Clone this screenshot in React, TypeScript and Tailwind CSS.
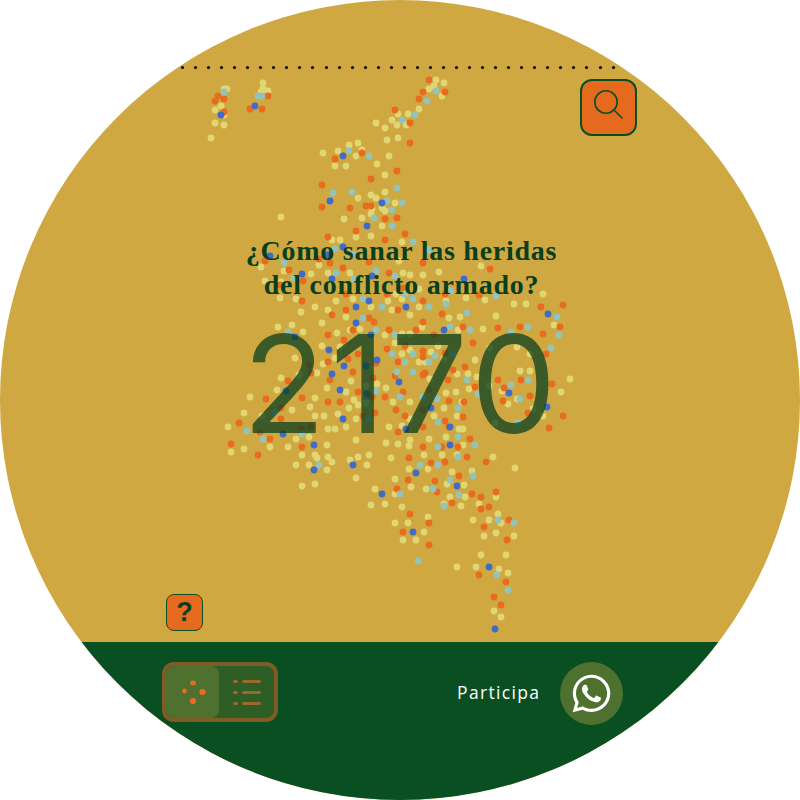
import { FaWhatsapp } from "react-icons/fa";

const raw: Record<string, number[]> = {
  "#E0D673": [263,83,263,89,268,91,261,92,224,89,227,89,221,106,215,110,224,115,215,123,224,125,211,138,436,80,444,83,434,86,429,89,442,96,419,109,408,114,398,114,392,120,397,125,406,125,376,123,385,128,387,140,398,138,349,145,358,143,362,150,338,151,323,153,356,156,389,156,335,166,346,166,377,164,385,175,385,192,371,195,376,198,358,198,395,203,382,208,385,211,372,209,371,214,362,218,344,219,382,226,371,236,356,237,340,240,332,240,402,242,281,217,
    371,236,261,267,319,265,284,271,311,274,328,273,350,273,265,281,281,282,280,298,296,299,336,301,353,299,388,301,301,312,315,307,328,310,346,317,392,310,371,307,373,307,322,323,360,329,278,327,292,325,303,332,337,333,350,330,322,346,340,347,385,335,395,343,
    399,261,403,273,410,275,423,275,439,272,481,266,419,289,402,299,396,294,419,307,410,315,446,301,466,298,485,300,514,304,526,304,496,316,449,318,460,317,422,327,458,330,483,329,554,325,410,334,402,334,410,350,431,352,438,346,517,347,490,348,530,354,402,354,543,294,
    295,358,317,373,335,358,323,364,281,378,299,375,277,390,250,397,327,388,346,392,351,381,366,386,386,388,315,398,354,400,366,403,358,405,349,408,393,402,310,407,244,413,292,410,262,416,315,416,324,416,338,414,356,419,346,427,389,427,228,427,328,429,335,429,309,437,296,439,356,440,386,443,244,449,231,452,270,447,288,447,327,445,302,455,315,455,317,458,328,457,332,462,350,460,358,457,369,455,391,458,296,465,309,465,327,470,367,465,356,478,302,486,315,484,375,489,395,479,395,494,
    430,352,419,362,425,362,475,360,444,359,468,374,457,374,430,379,477,377,520,371,530,371,570,379,561,392,469,389,456,392,446,393,508,404,517,399,502,391,410,402,444,408,462,402,434,416,457,416,543,416,533,409,410,419,495,423,459,429,463,429,402,426,390,428,446,437,429,439,410,440,398,444,409,446,463,445,424,455,442,455,457,455,493,457,409,469,428,469,452,472,472,471,515,468,395,480,447,484,411,487,426,489,464,485,450,497,465,497,496,497,489,386,
    376,489,465,486,371,505,385,504,402,507,444,504,461,506,479,504,498,514,473,520,489,520,501,523,428,517,395,523,408,523,424,532,403,540,416,540,484,536,496,533,514,536,481,555,506,555,457,567,476,567,499,569,508,573,494,611,501,617,377,384],
  "#E96B1E": [429,80,423,92,445,92,419,99,395,110,410,123,410,143,362,153,335,159,397,171,371,179,322,185,322,207,350,208,366,206,371,206,397,218,385,219,356,231,328,237,405,234,385,240,218,96,215,101,224,99,224,112,268,96,250,109,262,109,
    265,261,289,270,330,263,343,268,369,262,389,273,303,281,280,285,302,301,346,294,387,294,346,310,398,310,332,315,369,318,374,322,353,330,389,330,328,335,344,340,387,349,319,259,
    423,263,490,269,445,294,479,295,423,301,541,307,563,305,442,314,423,322,416,330,498,328,520,327,560,327,543,334,473,343,434,335,405,346,423,351,445,353,546,354,463,327,403,288,
    288,381,330,380,353,372,328,362,266,399,302,398,328,402,340,402,358,392,385,397,363,416,396,410,239,423,281,419,260,432,270,439,231,444,258,455,302,447,398,432,398,362,395,376,397,489,281,408,311,373,309,365,301,429,311,427,373,378,372,397,375,413,348,359,358,354,376,363,
    423,357,423,375,425,373,403,392,429,390,465,367,448,380,453,370,475,387,498,380,521,380,504,388,552,384,530,396,503,401,464,402,449,401,423,410,405,416,463,417,445,421,528,413,563,416,549,428,423,447,442,447,458,447,470,439,409,458,467,457,486,462,431,463,445,462,408,480,435,481,459,476,437,492,472,494,481,497,496,492,423,427,449,427,
    481,509,452,503,489,507,410,514,429,523,484,527,509,520,403,532,507,540,429,545,479,575,506,582,494,597,501,605],
  "#93C4BC": [224,92,258,96,262,96,436,91,427,101,415,115,402,120,349,151,369,156,397,188,333,193,352,192,387,201,402,203,392,210,374,218,392,226,413,242,
    335,249,284,263,294,278,336,273,354,279,376,271,363,299,382,307,363,318,376,330,288,332,395,335,392,354,395,276,352,254,
    429,250,405,294,413,299,429,307,446,304,451,291,496,296,467,313,557,317,559,335,450,327,470,330,511,332,528,327,551,348,435,356,413,354,
    247,431,263,439,302,434,319,465,368,419,397,372,400,397,400,494,275,412,376,391,
    453,354,405,362,429,362,413,372,467,380,478,394,511,385,528,380,520,399,423,397,437,399,458,408,438,422,458,437,475,445,438,447,458,457,420,465,438,465,473,476,450,480,433,489,459,495,518,423,
    432,489,444,506,450,481,498,520,514,523,418,561,497,575,508,590],
  "#3F6BC9": [221,115,255,106,343,156,330,201,382,203,367,226,
    270,256,343,247,328,255,302,274,332,279,372,276,369,301,356,307,356,323,371,335,329,350,295,337,
    464,279,406,307,444,330,548,314,
    332,374,286,391,340,390,367,394,366,366,343,419,283,434,314,445,353,465,314,470,382,494,399,382,344,366,377,360,
    431,408,509,393,547,407,406,429,450,427,450,445,416,473,457,486,
    413,532,489,567,495,629],
};

const dots = Object.entries(raw).flatMap(([color, list]) => {
  const out: { x: number; y: number; color: string }[] = [];
  for (let i = 0; i + 1 < list.length; i += 2) {
    const x = list[i];
    const y = list[i + 1];
    if (!out.some((d) => Math.hypot(d.x - x, d.y - y) < 2.5)) out.push({ x, y, color });
  }
  return out;
});

export default function App() {
  return (
    <div className="w-[800px] h-[800px] bg-white">
      <div className="relative w-[800px] h-[800px] rounded-full overflow-hidden bg-[#CFA841] flex flex-col">
        <svg className="absolute inset-0" width="800" height="800" viewBox="0 0 800 800">
          {dots.map((d, i) => (
            <circle key={i} cx={d.x} cy={d.y} r="3.4" fill={d.color} />
          ))}
        </svg>

        <main className="relative h-[642px] flex flex-col">
          <div className="mt-[66px] ml-[181px] w-[434px] h-[3px] flex justify-between">
            {Array.from({ length: 34 }).map((_, i) => (
              <span key={i} className="w-[3px] h-[3px] rounded-full bg-black" />
            ))}
          </div>

          <div className="mt-[10px] ml-[580px]">
            <button className="w-[57px] h-[57px] rounded-[12px] border-2 border-[#0A4F22] bg-[#E66A1E] flex items-center justify-center">
              <svg width="57" height="57" viewBox="0 0 57 57" fill="none" stroke="#0A4F22" strokeWidth="1.6" className="shrink-0">
                <circle cx="26" cy="23" r="11.2" />
                <path d="M34 31 L42.5 39.5" />
              </svg>
            </button>
          </div>

          <h1 className="mt-[98px] text-center text-[28px] leading-[34px] font-bold text-[#083F1C] font-['Liberation_Serif',serif] tracking-[0.75px] pl-[3px]">
            ¿Cómo sanar las heridas
            <br />
            del conflicto armado?
          </h1>

          <div className="mt-[13px] pl-[4px] text-center text-[136px] leading-[137px] font-normal tracking-[5px] text-[#0A4020]/75 font-['Inter',sans-serif]">
            2170
          </div>

          <div className="mt-auto mb-[11px] ml-[166px]">
            <button className="w-[37px] h-[37px] rounded-[8px] border-[1.5px] border-[#0A4F22] bg-[#E66A1E] flex items-center justify-center text-[27px] leading-none font-bold text-[#0A3F1E] font-['Liberation_Sans',sans-serif]">
              ?
            </button>
          </div>
        </main>

        <footer className="relative h-[158px] bg-[#0A4F22] flex items-start pt-[20px] pl-[162px]">
          <div className="w-[116px] h-[60px] rounded-[12px] border-[4px] border-[#7F5B26] bg-[#2F5D26] flex overflow-hidden">
            <div className="w-[53px] h-full rounded-[8px] bg-[#4F7130] flex items-center justify-center">
              <svg width="30" height="30" viewBox="0 0 30 30" fill="#E96B1E">
                <ellipse cx="15" cy="6" rx="3" ry="2.5" />
                <circle cx="6.5" cy="14" r="2.4" />
                <circle cx="24.5" cy="15" r="3.1" />
                <circle cx="15" cy="24" r="3.1" />
              </svg>
            </div>
            <div className="flex-1 flex flex-col items-start justify-center gap-[8px] pl-[14px]">
              {[0, 1, 2].map((i) => (
                <div key={i} className="flex gap-[4px]">
                  <span className="w-[5px] h-[3px] rounded-full bg-[#9A6A28]" />
                  <span className="w-[19px] h-[3px] rounded-full bg-[#9A6A28]" />
                </div>
              ))}
            </div>
          </div>

          <div className="ml-[179px] w-[82px] h-[62px] -mt-[1px] flex items-center text-white text-[17.5px] tracking-[1.35px] whitespace-nowrap font-['Open_Sans',sans-serif]">
            Participa
          </div>

          <div className="ml-[21px] w-[63px] h-[63px] rounded-full bg-[#4F7130] flex items-center justify-center text-white">
            <FaWhatsapp className="w-[43px] h-[43px]" />
          </div>
        </footer>
      </div>
    </div>
  );
}
